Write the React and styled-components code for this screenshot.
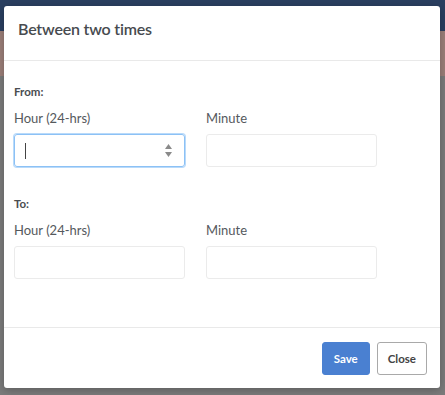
import React from 'react'
import styled, { createGlobalStyle } from 'styled-components'

const GlobalStyle = createGlobalStyle`
    html, body {
        margin: 0 ;
        padding: 0 ;
        height: 100% ;
    }
    body {
        font-family: Lato, "Open Sans", sans-serif ;
        background: #7b7b7b ;
    }
    #root {
        height: 100% ;
    }
`

const Page = styled.div`
    position: relative ;
    height: 395px ;
    overflow: hidden ;
    background: #7b7b7b ;
`

const TopBar = styled.div`
    height: 31px ;
    background: #2a3f60 ;
`

const Banner = styled.div`
    height: 45px ;
    background: #9b7f79 ;
`

const Overlay = styled.div`
    position: absolute ;
    inset: 0 ;
    padding: 6px 5px 0 4px ;
`

const Modal = styled.div`
    height: 382px ;
    background: #fff ;
    border-radius: 3px ;
    display: flex ;
    flex-direction: column ;
    box-shadow: 0 2px 8px rgba(0, 0, 0, 0.25) ;
`

const Header = styled.div`
    height: 55px ;
    box-sizing: border-box ;
    padding: 13px 14px 0 ;
    border-bottom: 1px solid #e9e9e9 ;

    h4 {
        margin: 0 ;
        font-size: 16px ;
        font-weight: 600 ;
        color: #474b4f ;
        letter-spacing: -0.2px ;
    }
`

const Body = styled.div`
    flex: 1 ;
    padding: 24px 10px 0 ;
    border-bottom: 1px solid #e9e9e9 ;
`

const Group = styled.div`
    margin-bottom: 30px ;
`

const GroupTitle = styled.div`
    font-size: 11.5px ;
    font-weight: 700 ;
    color: #4a4d50 ;
    margin-bottom: 12px ;
`

const Row = styled.div`
    display: grid ;
    grid-template-columns: 171px 171px ;
    column-gap: 21px ;
`

const Field = styled.label`
    display: flex ;
    flex-direction: column ;
    gap: 8px ;
    font-size: 13px ;
    color: #55595d ;
`

const InputBox = styled.div`
    height: 33px ;
    box-sizing: border-box ;
    border: 1px solid ${p => (p.focused ? '#8cc1f5' : '#ebebeb')} ;
    box-shadow: ${p => (p.focused ? '0 0 0 1px #b9dafa' : 'none')} ;
    border-radius: 3px ;
    display: flex ;
    align-items: center ;
    padding: 0 10px ;
    justify-content: space-between ;
`

const Caret = styled.span`
    width: 1px ;
    height: 16px ;
    background: #444 ;
`

const Spinner = styled.span`
    display: flex ;
    flex-direction: column ;
    gap: 3px ;
    align-items: center ;
    margin-right: 2px ;
`

const Footer = styled.div`
    height: 60px ;
    display: flex ;
    justify-content: flex-end ;
    align-items: center ;
    gap: 7px ;
    padding: 0 13px 0 0 ;
`

const Button = styled.button`
    height: 33px ;
    padding: 0 ${p => (p.primary ? '11px' : '10px')} ;
    border-radius: 3px ;
    font-family: Lato, "Open Sans", sans-serif ;
    font-size: 11.5px ;
    font-weight: 700 ;
    border: 1px solid ${p => (p.primary ? '#4a80d1' : '#a9a9a9')} ;
    background: ${p => (p.primary ? '#4a80d1' : '#fff')} ;
    color: ${p => (p.primary ? '#fff' : '#444')} ;
`

const TimeRow = ({ focused }) => (
    <Row>
        <Field>
            Hour (24-hrs)
            <InputBox focused={focused}>
                {focused && <Caret />}
                {focused && (
                    <Spinner>
                        <svg width="7" height="5" viewBox="0 0 7 5"><path d="M0 5 L3.5 0 L7 5Z" fill="#8a8a8a" /></svg>
                        <svg width="7" height="5" viewBox="0 0 7 5"><path d="M0 0 L3.5 5 L7 0Z" fill="#8a8a8a" /></svg>
                    </Spinner>
                )}
            </InputBox>
        </Field>
        <Field>
            Minute
            <InputBox />
        </Field>
    </Row>
)

const App = () => {
    return (
        <Page>
            <GlobalStyle />
            <TopBar />
            <Banner />
            <Overlay>
                <Modal>
                    <Header>
                        <h4>Between two times</h4>
                    </Header>
                    <Body>
                        <Group>
                            <GroupTitle>From:</GroupTitle>
                            <TimeRow focused />
                        </Group>
                        <Group>
                            <GroupTitle>To:</GroupTitle>
                            <TimeRow />
                        </Group>
                    </Body>
                    <Footer>
                        <Button primary>Save</Button>
                        <Button>Close</Button>
                    </Footer>
                </Modal>
            </Overlay>
        </Page>
    )
}

export default App
